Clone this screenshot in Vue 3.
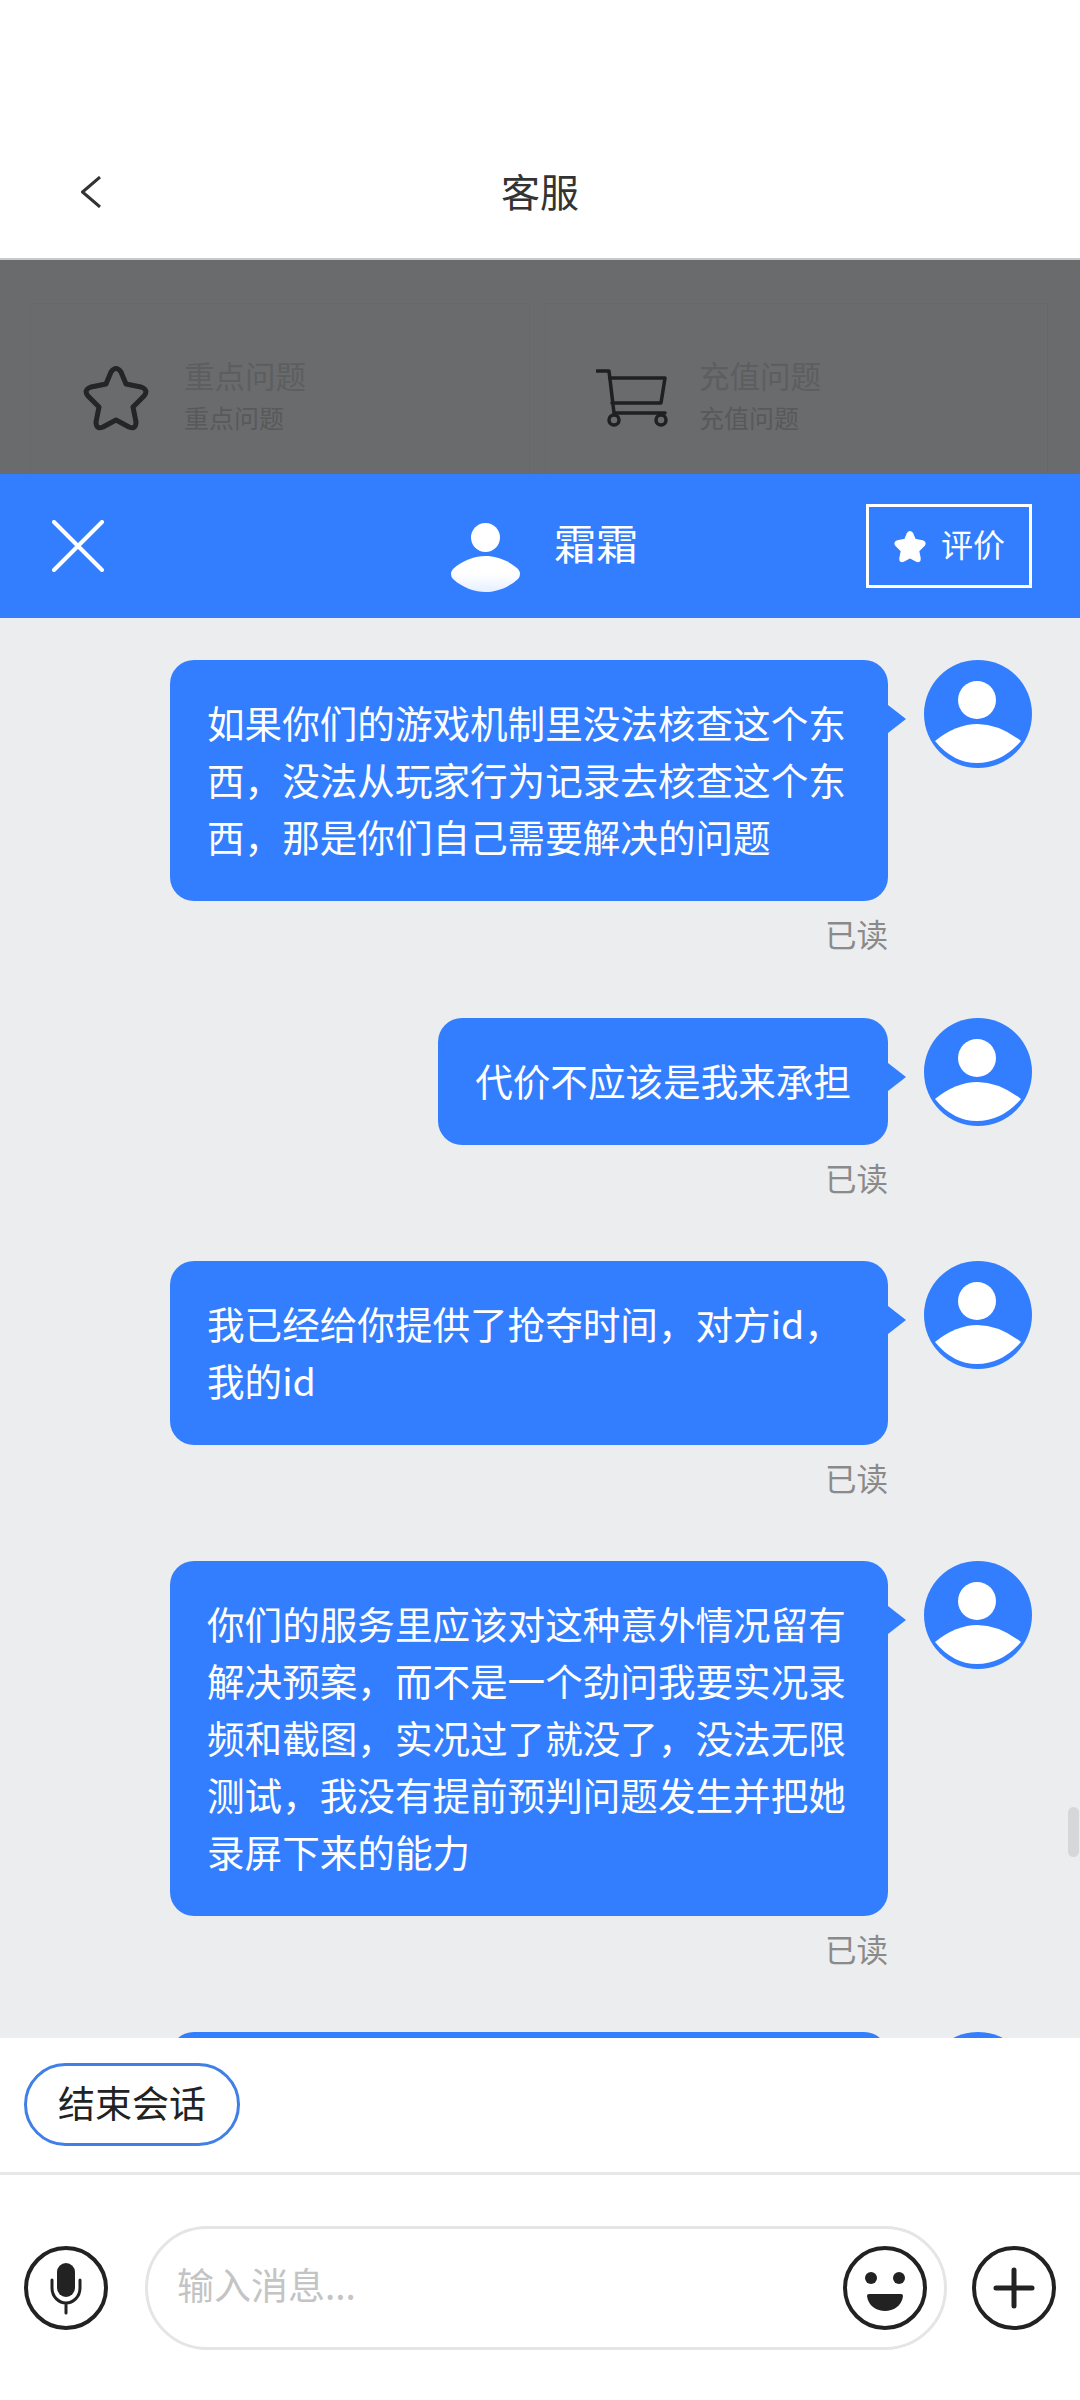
<template>
  <div class="page">
    <!-- Top nav -->
    <header class="nav">
      <svg class="back" width="20" height="32" viewBox="0 0 20 32">
        <polyline points="19,1 1.5,16 19,31" fill="none" stroke="#333" stroke-width="3" />
      </svg>
      <div class="nav-title">客服</div>
    </header>

    <!-- Dimmed page under the chat sheet -->
    <section class="backdrop">
      <div class="cell">
        <div class="cell-icon star-icon">
          <svg width="66" height="66" viewBox="0 0 66 66">
            <path :d="starPath" fill="none" stroke="#242526" stroke-width="5" stroke-linejoin="round" />
          </svg>
        </div>
        <div class="cell-text">
          <div class="cell-title">重点问题</div>
          <div class="cell-sub">重点问题</div>
        </div>
      </div>
      <div class="cell cell-right">
        <div class="cell-icon">
          <svg width="72" height="58" viewBox="0 0 72 58" fill="none" stroke="#1f2021" stroke-width="3.5" stroke-linejoin="round" stroke-linecap="round">
            <path d="M1 2H13L18 44H69" />
            <path d="M14 9H69L65 34H16" />
            <circle cx="18" cy="51" r="5" />
            <circle cx="65" cy="51" r="5" />
          </svg>
        </div>
        <div class="cell-text">
          <div class="cell-title">充值问题</div>
          <div class="cell-sub">充值问题</div>
        </div>
      </div>
    </section>

    <!-- Chat sheet -->
    <section class="sheet">
      <div class="sheet-head">
        <svg class="close" width="52" height="52" viewBox="0 0 52 52">
          <path d="M2 2L50 50M50 2L2 50" stroke="#fff" stroke-width="4" stroke-linecap="round" />
        </svg>
        <div class="agent">
          <svg width="70" height="70" viewBox="0 0 70 70">
            <defs>
              <linearGradient id="bodyFill" x1="0" y1="0" x2="0" y2="1">
                <stop offset="0.5" stop-color="#fff" />
                <stop offset="1" stop-color="#e6efff" />
              </linearGradient>
            </defs>
            <ellipse cx="34.5" cy="14.5" rx="14.5" ry="14.5" fill="#fff" />
            <path d="M2 46C12 37 24 33 34.5 33C45 33 57 37 67 46Q71 51 67 56C57 65 45 69 34.5 69C24 69 12 65 2 56Q-2 51 2 46Z" fill="url(#bodyFill)" />
          </svg>
          <span class="agent-name">霜霜</span>
        </div>
        <div class="rate">
          <svg width="34" height="33" viewBox="0 0 66 66">
            <path :d="starPath" fill="#fff" stroke="#fff" stroke-width="3" stroke-linejoin="round" />
          </svg>
          <span class="rate-text">评价</span>
        </div>
      </div>

      <div class="chat">
        <div v-for="(msg, i) in messages" :key="i" class="msg">
          <div class="msg-body">
            <div class="bubble">{{ msg }}</div>
            <div class="read">已读</div>
          </div>
          <svg class="avatar" width="108" height="108" viewBox="0 0 108 108">
            <circle cx="54" cy="54" r="54" fill="#337eff" />
            <circle cx="53" cy="40" r="19" fill="#fff" />
            <path d="M11 81Q53 47 97 81Q78 103 53 103Q29 103 11 81Z" fill="#fff" />
          </svg>
        </div>
        <div class="msg">
          <div class="msg-body"><div class="bubble bubble-cut"></div></div>
          <svg class="avatar" width="108" height="108" viewBox="0 0 108 108">
            <circle cx="54" cy="54" r="54" fill="#337eff" />
          </svg>
        </div>
        <div class="scrollbar"></div>
      </div>

      <div class="footer">
        <div class="quick">
          <div class="pill"><span class="pill-text">结束会话</span></div>
        </div>
        <div class="input-row">
          <svg width="84" height="84" viewBox="0 0 84 84" class="round-icon">
            <circle cx="42" cy="42" r="40" fill="none" stroke="#222" stroke-width="4" />
            <rect x="33" y="17" width="18" height="34" rx="9" fill="#222" />
            <path d="M28 34V42C28 51 35 57 42 57C49 57 56 51 56 42V34M42 57V67" fill="none" stroke="#222" stroke-width="3" stroke-linecap="round" />
          </svg>
          <div class="input">
            <span class="placeholder">输入消息...</span>
            <svg width="84" height="84" viewBox="0 0 84 84" class="round-icon">
              <circle cx="42" cy="42" r="40" fill="none" stroke="#222" stroke-width="4" />
              <circle cx="28" cy="32" r="6" fill="#222" />
              <circle cx="56" cy="32" r="6" fill="#222" />
              <path d="M26 48H58Q60 48 60 50C59 60 50 65 42 65C34 65 25 60 24 50Q24 48 26 48Z" fill="#222" />
            </svg>
          </div>
          <svg width="84" height="84" viewBox="0 0 84 84" class="round-icon">
            <circle cx="42" cy="42" r="40" fill="none" stroke="#222" stroke-width="4" />
            <path d="M24 42H60M42 24V60" fill="none" stroke="#222" stroke-width="5" stroke-linecap="round" />
          </svg>
        </div>
      </div>
    </section>
  </div>
</template>

<script setup>
const starPath =
  'M28 7Q33 0 38 7L43 19L58 22Q66 25 61 31L50 42L53 57Q53 65 46 62L33 55L20 62Q13 65 13 57L16 42L5 31Q0 25 8 22L23 19Z'

const messages = [
  '如果你们的游戏机制里没法核查这个东西，没法从玩家行为记录去核查这个东西，那是你们自己需要解决的问题',
  '代价不应该是我来承担',
  '我已经给你提供了抢夺时间，对方id，我的id',
  '你们的服务里应该对这种意外情况留有解决预案，而不是一个劲问我要实况录频和截图，实况过了就没了，没法无限测试，我没有提前预判问题发生并把她录屏下来的能力',
]
</script>

<style scoped>
.page {
  width: 1080px;
  height: 2400px;
  display: flex;
  flex-direction: column;
  overflow: hidden;
  background: #fff;
  font-family: "Noto Sans CJK SC", "Noto Sans", sans-serif;
}

.nav {
  height: 260px;
  box-sizing: border-box;
  padding-top: 130px;
  border-bottom: 2px solid #c9c9c9;
  position: relative;
}
.back {
  position: absolute;
  left: 81px;
  top: 176px;
}
.nav-title {
  height: 126px;
  line-height: 121px;
  text-align: center;
  font-size: 39px;
  color: #333;
}

.backdrop {
  height: 214px;
  box-sizing: border-box;
  padding: 43px 0 0 30px;
  background: #6a6b6d;
  display: grid;
  grid-template-columns: 500px 504px;
  column-gap: 14px;
  overflow: hidden;
}
.cell {
  display: flex;
  align-items: center;
  align-self: start;
  box-sizing: border-box;
  height: 171px;
  padding: 54px 0 36px 50px;
  border-top: 1px solid #666769;
  border-left: 1px solid #68696b;
  border-right: 1px solid #666769;
}
.cell-right {
  padding-left: 51px;
}
.cell-icon {
  width: 104px;
  flex: none;
  display: flex;
}
.star-icon svg {
  margin-left: 2px;
}
.cell-text {
  margin-bottom: 7px;
  margin-left: -1px;
}
.cell-title {
  font-size: 30.5px;
  line-height: 42px;
  color: #5d5e60;
}
.cell-sub {
  font-size: 25px;
  line-height: 36px;
  margin-top: 3px;
  color: #58595b;
}

.sheet {
  flex: 1;
  display: flex;
  flex-direction: column;
  min-height: 0;
}
.sheet-head {
  height: 144px;
  flex: none;
  display: flex;
  align-items: center;
  padding: 0 48px 0 52px;
  background: #337eff;
  color: #fff;
}
.close {
  flex: none;
}
.agent {
  margin-left: 347px;
  display: flex;
  align-items: center;
  gap: 33px;
  margin-top: 24px;
}
.agent-name {
  font-size: 42px;
  line-height: 50px;
  margin-bottom: 32px;
}
.rate {
  margin-left: auto;
  width: 166px;
  height: 84px;
  box-sizing: border-box;
  border: 3px solid #fff;
  display: flex;
  align-items: center;
  justify-content: center;
  gap: 14px;
  font-size: 32px;
}
.rate-text {
  margin-bottom: 6px;
}

.chat {
  flex: 1;
  min-height: 0;
  overflow: hidden;
  position: relative;
  box-sizing: border-box;
  padding: 42px 49px 0 0;
  background: #ecedef;
}
.msg {
  display: flex;
  justify-content: flex-end;
  align-items: flex-start;
  gap: 36px;
  margin-bottom: 64px;
}
.msg:first-child {
  margin-bottom: 65px;
}
.msg .avatar {
  margin-right: -1px;
}
.msg-body {
  display: flex;
  flex-direction: column;
  align-items: flex-end;
}
.bubble {
  position: relative;
  box-sizing: border-box;
  max-width: 718px;
  padding: 33px 37px 37px;
  border-radius: 24px;
  background: #337eff;
  color: #fff;
  font-size: 37.6px;
  line-height: 57px;
}
.bubble::after {
  content: "";
  position: absolute;
  left: 100%;
  top: 45px;
  border-left: 18px solid #337eff;
  border-top: 14px solid transparent;
  border-bottom: 14px solid transparent;
}
.bubble-cut {
  width: 718px;
  height: 127px;
}
.read {
  margin-top: 12px;
  font-size: 31.5px;
  line-height: 40px;
  color: #8a8a8a;
}
.avatar {
  flex: none;
}
.scrollbar {
  position: absolute;
  right: 1px;
  top: 1189px;
  width: 11px;
  height: 50px;
  border-radius: 6px;
  background: #d6d7d9;
}

.footer {
  flex: none;
  height: 362px;
  background: #fff;
  box-shadow: 0 -2px 0 #e6e7e9;
}
.quick {
  height: 137px;
  box-sizing: border-box;
  padding: 25px 0 0 24px;
  border-bottom: 3px solid #e8e8e8;
}
.pill {
  width: 216px;
  height: 83px;
  box-sizing: border-box;
  border: 3px solid #3f7fe6;
  border-radius: 42px;
  display: flex;
  align-items: center;
  justify-content: center;
  font-size: 37px;
  color: #222;
}
.pill-text {
  margin-bottom: 6px;
}
.input-row {
  display: flex;
  align-items: center;
  padding: 51px 24px 0;
}
.round-icon {
  flex: none;
}
.input {
  width: 802px;
  height: 124px;
  box-sizing: border-box;
  margin: 0 25px 0 37px;
  padding: 0 17px 0 29px;
  border: 3px solid #e5e5e5;
  border-radius: 62px;
  display: flex;
  align-items: center;
  justify-content: space-between;
}
.placeholder {
  font-size: 37px;
  color: #c4c4c4;
  margin-bottom: 9px;
}
</style>

<style>
html, body {
  margin: 0;
  background: #fff;
}
</style>
